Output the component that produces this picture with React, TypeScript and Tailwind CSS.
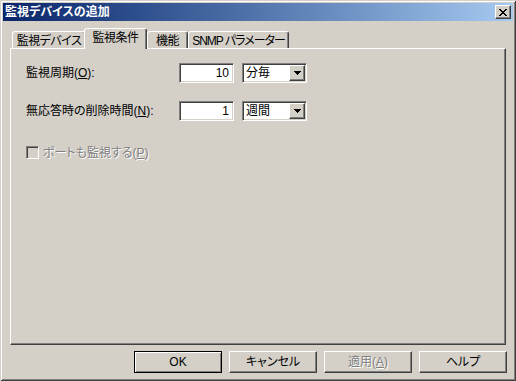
import React from "react";

const RAISED =
  "border border-t-white border-l-white border-r-[#404040] border-b-[#404040] shadow-[inset_-1px_-1px_#808080]";
const SUNKEN =
  "border border-t-[#808080] border-l-[#808080] border-r-white border-b-white shadow-[inset_1px_1px_#404040,inset_-1px_-1px_#D4D0C8]";
const DISABLED = "text-[#808080] [text-shadow:1px_1px_#ffffff]";

function Tab({
  label,
  w,
  selected,
  track = "tracking-[-0.5px]",
}: {
  label: string;
  w: string;
  selected?: boolean;
  track?: string;
}) {
  if (selected) {
    return (
      <div
        className={`relative z-10 -ml-[2px] -mb-[1px] h-[21px] ${w} ${track} shrink-0 whitespace-nowrap rounded-t-[3px] border-t border-l border-r border-t-white border-l-white border-r-[#404040] bg-[#D4D0C8] shadow-[inset_-1px_0_#808080] flex justify-center pt-[2px] leading-[14px]`}
      >
        {label}
      </div>
    );
  }
  return (
    <div
      className={`h-[17px] ${w} ${track} shrink-0 whitespace-nowrap rounded-t-[3px] border-t border-l border-r border-t-white border-l-white border-r-[#404040] shadow-[inset_-1px_0_#808080] flex justify-center pt-[2px] leading-[14px]`}
    >
      {label}
    </div>
  );
}

function DropArrow() {
  return (
    <svg width="7" height="4" viewBox="0 0 7 4">
      <path d="M0 0h7v1H0zM1 1h5v1H1zM2 2h3v1H2zM3 3h1v1H3z" fill="#000" />
    </svg>
  );
}

function Combo({ value }: { value: string }) {
  return (
    <div className={`w-[65px] h-[20px] bg-white ${SUNKEN} flex items-stretch p-[1px]`}>
      <div className="flex-1 pl-[2px] leading-[16px]">{value}</div>
      <div className={`w-[16px] bg-[#D4D0C8] ${RAISED} flex items-center justify-center`}>
        <DropArrow />
      </div>
    </div>
  );
}

function Edit({ value }: { value: string }) {
  return (
    <div className={`w-[55px] h-[20px] bg-white ${SUNKEN} text-right pr-[4px] leading-[18px]`}>
      {value}
    </div>
  );
}

function Btn({ children, def, disabled }: { children: React.ReactNode; def?: boolean; disabled?: boolean }) {
  const cls = def
    ? "border border-black shadow-[inset_1px_1px_#ffffff,inset_-1px_-1px_#808080]"
    : RAISED;
  return (
    <div
      className={`w-[88px] h-[22px] ${cls} flex items-center justify-center leading-[14px] whitespace-nowrap ${disabled ? DISABLED : ""}`}
    >
      {children}
    </div>
  );
}

export default function App() {
  return (
    <div
      className="w-[516px] h-[381px] bg-[#D4D0C8] text-black text-[12px] font-['Liberation_Sans','Noto_Sans_CJK_JP',sans-serif] [font-feature-settings:'palt'] shadow-[inset_1px_1px_#D4D0C8,inset_-1px_-1px_#404040,inset_2px_2px_#ffffff,inset_-2px_-2px_#808080] flex flex-col overflow-hidden select-none"
    >
      {/* caption */}
      <div className="mx-[3px] mt-[3px] h-[18px] bg-linear-to-r from-[#0A246A] to-[#A6CAF0] flex items-center justify-between pl-[2px] pr-[2px]">
        <span className="text-white font-bold text-[12px] leading-[18px] whitespace-nowrap">監視デバイスの追加</span>
        <div className={`w-[16px] h-[14px] bg-[#D4D0C8] ${RAISED} flex items-center justify-center`}>
          <svg width="8" height="7" viewBox="0 0 8 7">
            <path
              d="M0 0h2v1H0zM6 0h2v1H6zM1 1h2v1H1zM5 1h2v1H5zM2 2h4v1H2zM3 3h2v1H3zM2 4h4v1H2zM1 5h2v1H1zM5 5h2v1H5zM0 6h2v1H0zM6 6h2v1H6z"
              fill="#000"
            />
          </svg>
        </div>
      </div>

      {/* body */}
      <div className="px-[10px] pt-[7px]">
        <div className="flex items-end pl-[2px] h-[20px]">
          <Tab label="監視デバイス" w="w-[74px]" />
          <Tab label="監視条件" w="w-[63px]" selected />
          <Tab label="機能" w="w-[41px]" />
          <Tab label="SNMP パラメーター" w="w-[101px]" track="tracking-[-1px]" />
        </div>
        <div className="h-[297px] border border-t-white border-l-white border-r-[#404040] border-b-[#404040] shadow-[inset_-1px_-1px_#808080] pt-[14px] pl-[15px]">
          <div className="flex items-center h-[20px]">
            <div className="w-[153px] leading-[14px] whitespace-nowrap">
              監視周期(<span className="underline">O</span>):
            </div>
            <Edit value="10" />
            <div className="w-[8px]" />
            <Combo value="分毎" />
          </div>
          <div className="flex items-center h-[20px] mt-[18px]">
            <div className="w-[153px] leading-[14px] whitespace-nowrap">
              無応答時の削除時間(<span className="underline">N</span>):
            </div>
            <Edit value="1" />
            <div className="w-[8px]" />
            <Combo value="週間" />
          </div>
          <div className="flex items-center mt-[25px] h-[13px]">
            <div className="w-[13px] h-[13px] bg-[#D4D0C8] border border-t-[#808080] border-l-[#808080] border-r-white border-b-white shadow-[inset_1px_1px_#404040,inset_-1px_-1px_#D4D0C8]" />
            <span className={`ml-[4px] leading-[14px] whitespace-nowrap ${DISABLED}`}>
              ポートも監視する(<span className="underline">P</span>)
            </span>
          </div>
        </div>
      </div>

      {/* buttons */}
      <div className="flex justify-end gap-[7px] pr-[9px] mt-[6px]">
        <Btn def>OK</Btn>
        <Btn>キャンセル</Btn>
        <Btn disabled>
          適用(<span className="underline">A</span>)
        </Btn>
        <Btn>ヘルプ</Btn>
      </div>
    </div>
  );
}
